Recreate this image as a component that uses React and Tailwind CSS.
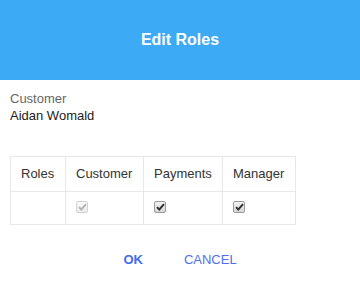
import React from "react";

function Check({ disabled }) {
  return (
    <span
      className={
        disabled
          ? "inline-flex h-[12px] w-[12px] items-center justify-center rounded-[2px] border border-[#d4d4d4] bg-gradient-to-b from-[#fafafa] to-[#ececec] align-middle"
          : "inline-flex h-[12px] w-[12px] items-center justify-center rounded-[2px] border border-[#9a9a9a] bg-gradient-to-b from-[#f4f4f4] to-[#d6d6d6] align-middle"
      }
    >
      <svg width="9" height="8" viewBox="0 0 9 8">
        <path
          d="M1 4.2 L3.3 6.5 L8 1.2"
          fill="none"
          stroke={disabled ? "#b4b4b4" : "#2f2f2f"}
          strokeWidth="1.9"
        />
      </svg>
    </span>
  );
}

export default function App() {
  const roles = [
    { name: "Customer", checked: true, disabled: true },
    { name: "Payments", checked: true },
    { name: "Manager", checked: true },
  ];

  return (
    <div className="h-[287px] w-[360px] bg-white font-['Liberation_Sans',Arial,sans-serif]">
      {/* Header */}
      <div className="flex h-[80px] items-center justify-center bg-[#3caaf5]">
        <h2 className="text-[16px] font-bold text-white">Edit Roles</h2>
      </div>

      <div className="px-[10px] pt-[10px]">
        <div className="text-[13px] leading-[17px] text-[#666]">Customer</div>
        <div className="text-[13px] leading-[17px] text-[#222]">Aidan Womald</div>

        <table className="mt-[32px] w-[285px] table-fixed border-collapse text-[13px] text-[#333]">
          <colgroup>
            <col className="w-[55px]" />
            <col className="w-[78px]" />
            <col className="w-[79px]" />
            <col className="w-[73px]" />
          </colgroup>
          <thead>
            <tr className="h-[35px]">
              <th className="border border-[#e8e8e8] px-[10px] text-left font-normal">Roles</th>
              {roles.map((r) => (
                <th key={r.name} className="border border-[#e8e8e8] px-[10px] text-left font-normal">
                  {r.name}
                </th>
              ))}
            </tr>
          </thead>
          <tbody>
            <tr className="h-[33px]">
              <td className="border border-[#e8e8e8] px-[10px]"></td>
              {roles.map((r) => (
                <td key={r.name} className="border border-[#e8e8e8] px-[10px] pb-[3px] align-middle leading-none">
                  <Check disabled={r.disabled} />
                </td>
              ))}
            </tr>
          </tbody>
        </table>
      </div>

      {/* Actions */}
      <div className="mt-[27px] flex justify-center gap-[41px] text-[13px] leading-[16px]">
        <button className="font-bold text-[#3f6cf0]">OK</button>
        <button className="text-[#4f6ef2]">CANCEL</button>
      </div>
    </div>
  );
}
